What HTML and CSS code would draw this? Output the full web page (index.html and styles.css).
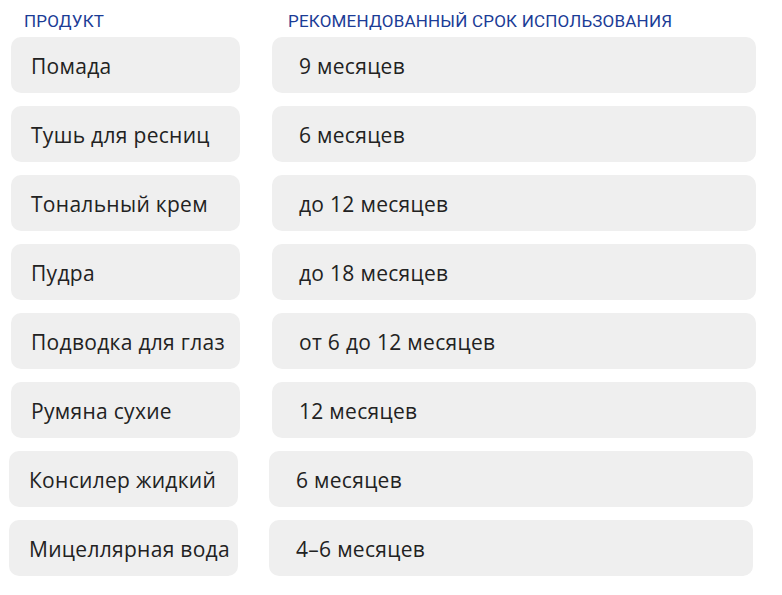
FILE: index.html
```html
<!DOCTYPE html>
<html lang="ru">
<head>
<meta charset="utf-8">
<title>Сроки использования косметики</title>
<link rel="stylesheet" href="styles.css">
</head>
<body>
<div class="table">
  <div class="head">
    <div class="head-cell head-product">ПРОДУКТ</div>
    <div class="head-cell head-term">РЕКОМЕНДОВАННЫЙ СРОК ИСПОЛЬЗОВАНИЯ</div>
  </div>
  <div class="row"><div class="cell cell-product">Помада</div><div class="cell cell-term">9 месяцев</div></div>
  <div class="row"><div class="cell cell-product">Тушь для ресниц</div><div class="cell cell-term">6 месяцев</div></div>
  <div class="row"><div class="cell cell-product">Тональный крем</div><div class="cell cell-term">до 12 месяцев</div></div>
  <div class="row"><div class="cell cell-product">Пудра</div><div class="cell cell-term">до 18 месяцев</div></div>
  <div class="row"><div class="cell cell-product">Подводка для глаз</div><div class="cell cell-term">от 6 до 12 месяцев</div></div>
  <div class="row"><div class="cell cell-product">Румяна сухие</div><div class="cell cell-term">12 месяцев</div></div>
  <div class="row row-shifted"><div class="cell cell-product">Консилер жидкий</div><div class="cell cell-term">6 месяцев</div></div>
  <div class="row row-shifted"><div class="cell cell-product">Мицеллярная вода</div><div class="cell cell-term">4–6 месяцев</div></div>
</div>
</body>
</html>
```
FILE: styles.css
```css
html, body {
  margin: 0;
  padding: 0;
  background: #ffffff;
}

.table {
  padding: 0 0 0 11px;
  display: flex;
  flex-direction: column;
  gap: 13px;
}

.head {
  display: grid;
  grid-template-columns: 229px 484px;
  column-gap: 32px;
  height: 25px;
  padding-top: 11px;
  font-family: Roboto, "Liberation Sans", sans-serif;
  font-size: 17px;
  line-height: 20px;
  letter-spacing: 0.2px;
  color: #1b3c96;
  margin-bottom: -12px;
}

.head-product {
  padding-left: 13px;
}

.head-term {
  padding-left: 16px;
}

.row {
  display: grid;
  grid-template-columns: 229px 484px;
  column-gap: 32px;
  height: 56px;
}

.row-shifted {
  margin-left: -2px;
  column-gap: 31px;
}

.cell {
  background: #efefef;
  border-radius: 10px;
  display: flex;
  align-items: center;
  padding-top: 2px;
  box-sizing: border-box;
  font-family: "Open Sans", "Noto Sans", sans-serif;
  font-size: 21px;
  line-height: 28px;
  letter-spacing: 0.3px;
  color: #222222;
  white-space: nowrap;
}

.cell-product {
  padding-left: 20px;
}

.cell-term {
  padding-left: 27px;
}
```
